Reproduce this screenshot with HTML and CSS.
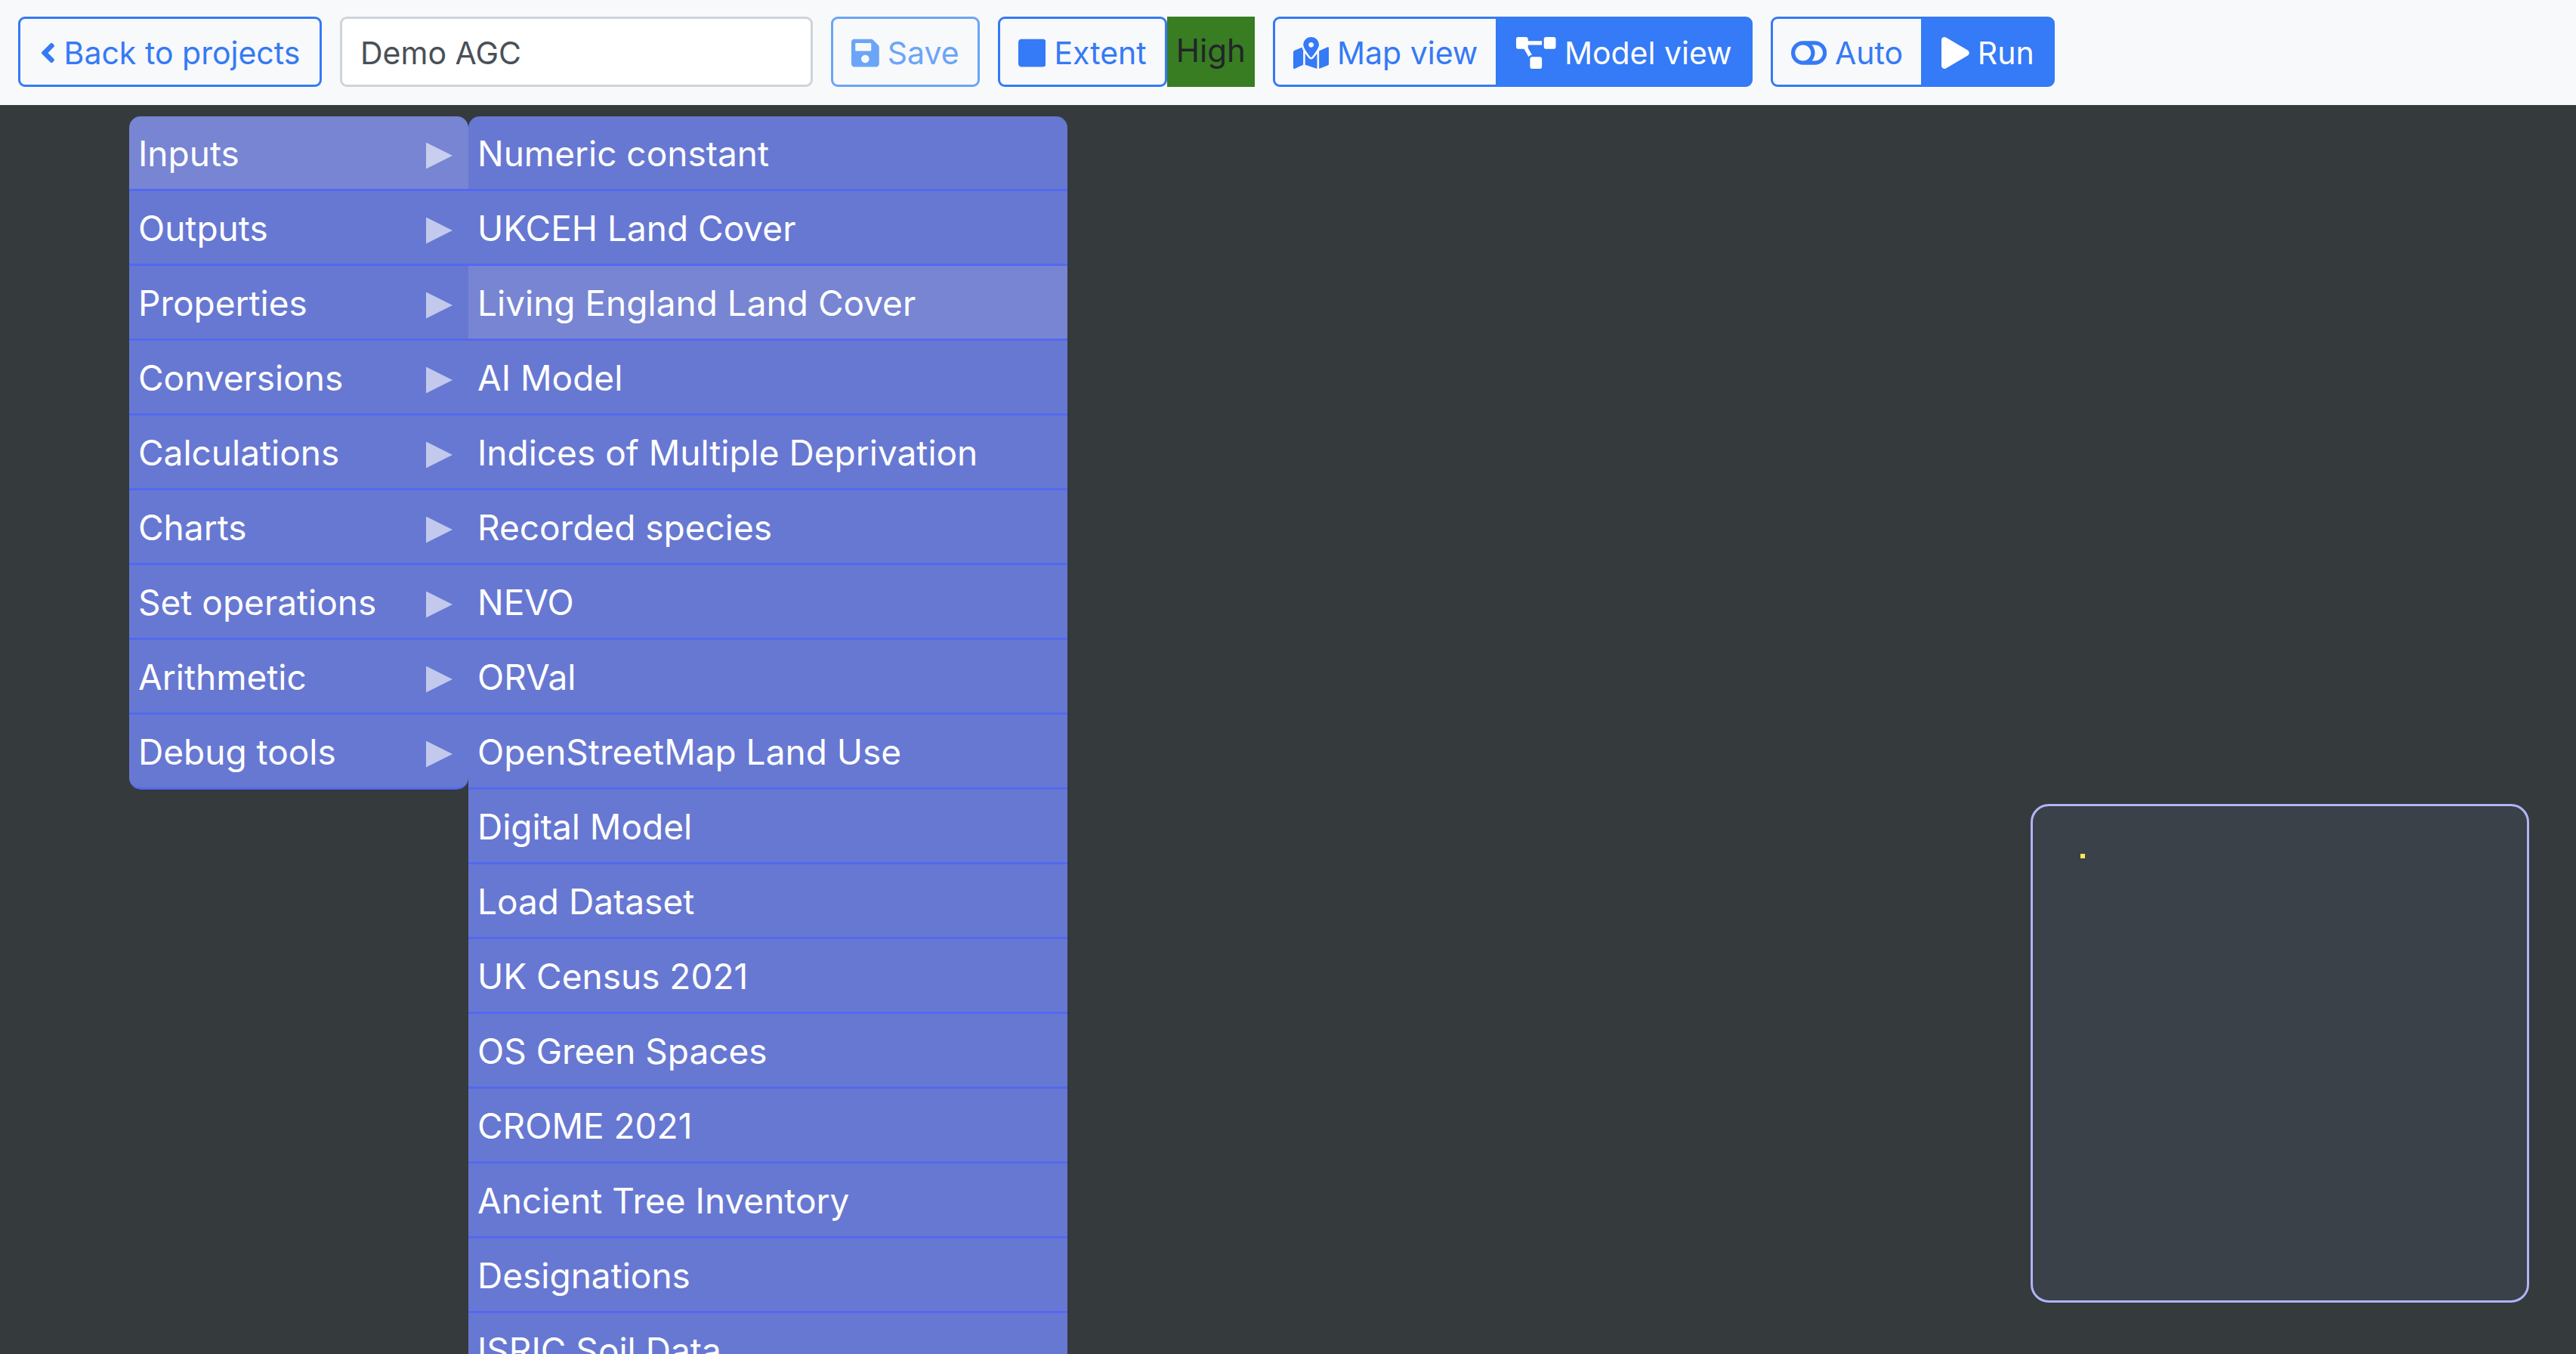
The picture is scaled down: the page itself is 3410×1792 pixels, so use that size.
FILE: index.html
```html
<!DOCTYPE html>
<html lang="en">
<head>
<meta charset="utf-8">
<title>Demo AGC</title>
<link rel="stylesheet" href="styles.css">
</head>
<body>
<header class="toolbar">
  <button class="btn btn-back" type="button">
    <svg class="icon" viewBox="0 0 256 512" aria-hidden="true"><path d="M31.7 239l136-136c9.4-9.4 24.6-9.4 33.9 0l22.6 22.6c9.4 9.4 9.4 24.6 0 33.9L127.9 256l96.4 96.4c9.4 9.4 9.4 24.6 0 33.9L201.7 409c-9.4 9.4-24.6 9.4-33.9 0l-136-136c-9.5-9.4-9.5-24.6-.1-34z"/></svg>
    <span>Back to projects</span>
  </button>
  <input class="project-name" type="text" value="Demo AGC" aria-label="Project name">
  <button class="btn" type="button" disabled>
    <svg class="icon" viewBox="0 0 448 512" aria-hidden="true"><path d="M433.941 129.941l-83.882-83.882A48 48 0 0 0 316.118 32H48C21.49 32 0 53.49 0 80v352c0 26.51 21.49 48 48 48h352c26.51 0 48-21.49 48-48V163.882a48 48 0 0 0-14.059-33.941zM224 416c-35.346 0-64-28.654-64-64 0-35.346 28.654-64 64-64s64 28.654 64 64c0 35.346-28.654 64-64 64zm96-304.52V212c0 6.627-5.373 12-12 12H76c-6.627 0-12-5.373-12-12V108c0-6.627 5.373-12 12-12h228.52c3.183 0 6.235 1.264 8.485 3.515l3.48 3.48A11.996 11.996 0 0 1 320 111.48z"/></svg>
    <span>Save</span>
  </button>
  <div class="extent">
    <button class="btn" type="button">
      <svg class="icon" viewBox="0 0 448 512" aria-hidden="true"><path d="M400 32H48C21.5 32 0 53.5 0 80v352c0 26.5 21.5 48 48 48h352c26.5 0 48-21.5 48-48V80c0-26.5-21.5-48-48-48z"/></svg>
      <span>Extent</span>
    </button>
    <span class="quality">High</span>
  </div>
  <div class="btn-group" role="group" aria-label="View">
    <button class="btn" type="button">
      <svg class="icon" viewBox="0 0 576 512" aria-hidden="true"><path d="M288 0c-69.59 0-126 56.41-126 126 0 56.26 82.35 158.8 113.9 196.02 6.39 7.54 17.82 7.54 24.2 0C331.65 284.8 414 182.26 414 126 414 56.41 357.59 0 288 0zm0 168c-23.2 0-42-18.8-42-42s18.8-42 42-42 42 18.8 42 42-18.8 42-42 42zM20.12 215.95A32.006 32.006 0 0 0 0 245.66v250.32c0 11.32 11.43 19.06 21.94 14.86L160 448V214.92c-8.84-15.98-16.07-31.54-21.25-46.42L20.12 215.95zM288 359.67c-14.07 0-27.38-6.18-36.51-16.96-19.66-23.2-40.57-49.62-59.49-76.72v182l192 64V266c-18.92 27.09-39.82 53.52-59.49 76.72-9.13 10.77-22.44 16.95-36.51 16.95zm266.06-198.51L416 224v288l139.88-55.95A31.996 31.996 0 0 0 576 426.34V176.02c0-11.32-11.43-19.06-21.94-14.86z"/></svg>
      <span>Map view</span>
    </button>
    <button class="btn btn-solid" type="button">
      <svg class="icon" viewBox="0 0 640 512" aria-hidden="true"><path d="M384 320H256c-17.67 0-32 14.33-32 32v128c0 17.67 14.33 32 32 32h128c17.67 0 32-14.33 32-32V352c0-17.67-14.33-32-32-32zM192 32c0-17.67-14.33-32-32-32H32C14.33 0 0 14.33 0 32v128c0 17.67 14.33 32 32 32h95.72l73.16 128.04C211.98 300.98 232.4 288 256 288h.28L192 175.51V128h224V64H192V32zM608 0H480c-17.67 0-32 14.33-32 32v128c0 17.67 14.33 32 32 32h128c17.67 0 32-14.33 32-32V32c0-17.67-14.33-32-32-32z"/></svg>
      <span>Model view</span>
    </button>
  </div>
  <div class="btn-group" role="group" aria-label="Run">
    <button class="btn" type="button">
      <svg class="icon" viewBox="0 0 576 512" aria-hidden="true"><path d="M384 64H192C85.961 64 0 149.961 0 256s85.961 192 192 192h192c106.039 0 192-85.961 192-192S490.039 64 384 64zM64 256c0-70.741 57.249-128 128-128 70.741 0 128 57.249 128 128 0 70.741-57.249 128-128 128-70.741 0-128-57.249-128-128zm320 128h-48.905c65.217-72.858 65.236-183.12 0-256H384c70.741 0 128 57.249 128 128 0 70.741-57.249 128-128 128z"/></svg>
      <span>Auto</span>
    </button>
    <button class="btn btn-solid" type="button">
      <svg class="icon" viewBox="0 0 448 512" aria-hidden="true"><path d="M424.4 214.7L72.4 6.6C43.8-10.3 0 6.1 0 47.9V464c0 37.5 40.7 60.1 72.4 41.3l352-208c31.4-18.5 31.5-64.1 0-82.6z"/></svg>
      <span>Run</span>
    </button>
  </div>
</header>

<main class="workspace">
  <nav class="context-menu" aria-label="Add node">
    <ul class="menu menu-main">
      <li class="item has-sub is-active">Inputs</li>
      <li class="item has-sub">Outputs</li>
      <li class="item has-sub">Properties</li>
      <li class="item has-sub">Conversions</li>
      <li class="item has-sub">Calculations</li>
      <li class="item has-sub">Charts</li>
      <li class="item has-sub">Set operations</li>
      <li class="item has-sub">Arithmetic</li>
      <li class="item has-sub">Debug tools</li>
    </ul>
    <ul class="menu menu-sub">
      <li class="item">Numeric constant</li>
      <li class="item">UKCEH Land Cover</li>
      <li class="item is-active">Living England Land Cover</li>
      <li class="item">AI Model</li>
      <li class="item">Indices of Multiple Deprivation</li>
      <li class="item">Recorded species</li>
      <li class="item">NEVO</li>
      <li class="item">ORVal</li>
      <li class="item">OpenStreetMap Land Use</li>
      <li class="item">Digital Model</li>
      <li class="item">Load Dataset</li>
      <li class="item">UK Census 2021</li>
      <li class="item">OS Green Spaces</li>
      <li class="item">CROME 2021</li>
      <li class="item">Ancient Tree Inventory</li>
      <li class="item">Designations</li>
      <li class="item">ISRIC Soil Data</li>
    </ul>
  </nav>
  <div class="minimap"><div class="minimap-node"></div></div>
</main>
</body>
</html>
```
FILE: styles.css
```css
* { box-sizing: border-box; }

body {
  margin: 0;
  height: 100vh;
  display: flex;
  flex-direction: column;
  overflow: hidden;
  font-family: Inter, "Liberation Sans", sans-serif;
  background: #353a3d;
}

/* Toolbar */
.toolbar {
  flex: none;
  display: flex;
  align-items: center;
  gap: 24px;
  padding: 22px 24px 24px;
  background: #f8f9fb;
}

.btn {
  display: flex;
  align-items: center;
  justify-content: center;
  gap: 11px;
  height: 93px;
  margin: 0;
  padding: 2px 24px 0;
  border: 3px solid #357af6;
  border-radius: 9px;
  background: transparent;
  color: #357af6;
  font-family: inherit;
  font-size: 41px;
  line-height: 60px;
  white-space: nowrap;
}
.btn:disabled { color: #6ba5f7; border-color: #6ba5f7; }
.btn-solid { background: #357af6; color: #fff; }
.btn-back { min-width: 402px; }

.icon { height: 42px; fill: currentColor; }

.project-name {
  width: 626px;
  height: 93px;
  padding: 2px 24px 0;
  border: 3px solid #ced4da;
  border-radius: 9px;
  background: #fff;
  color: #495057;
  font-family: inherit;
  font-size: 41px;
}

.extent { display: flex; }
.quality {
  padding: 0 12px;
  background: #387d22;
  color: #212529;
  font-size: 42px;
  line-height: 90px;
}

.btn-group { display: flex; }
.btn-group .btn:first-child { border-radius: 9px 0 0 9px; }
.btn-group .btn:last-child { margin-left: -3px; border-radius: 0 9px 9px 0; }

/* Node editor */
.workspace {
  position: relative;
  flex: 1;
  overflow: hidden;
}

.context-menu {
  position: absolute;
  top: 15px;
  left: 171px;
  display: flex;
  align-items: flex-start;
}
.menu {
  margin: 0;
  padding: 0;
  list-style: none;
  border-radius: 15px;
  overflow: hidden;
}
.menu-main { width: 449px; }
.menu-sub { width: 793px; }

.item {
  display: flex;
  align-items: center;
  justify-content: space-between;
  height: 99px;
  padding: 2px 12px 0;
  border-bottom: 3px solid #5468ef;
  background: #6778d2;
  color: #fff;
  font-size: 46px;
  white-space: nowrap;
}
.item.is-active { background: #7785d3; }
.menu-main .item:last-child { border-radius: 0 0 15px 15px; }

.has-sub { padding-right: 21px; }
.has-sub::after {
  content: "";
  width: 35px;
  height: 35px;
  margin-top: 6px;
  background: #fff;
  opacity: 0.6;
  clip-path: polygon(0 0, 100% 50%, 0 100%);
}

.minimap {
  position: absolute;
  right: 62px;
  bottom: 68px;
  width: 660px;
  height: 660px;
  padding: 63px;
  border: 3px solid #b0b4fb;
  border-radius: 24px;
  background: #3a4148;
}
.minimap-node {
  width: 6px;
  height: 6px;
  background: #ffe658;
}
```
